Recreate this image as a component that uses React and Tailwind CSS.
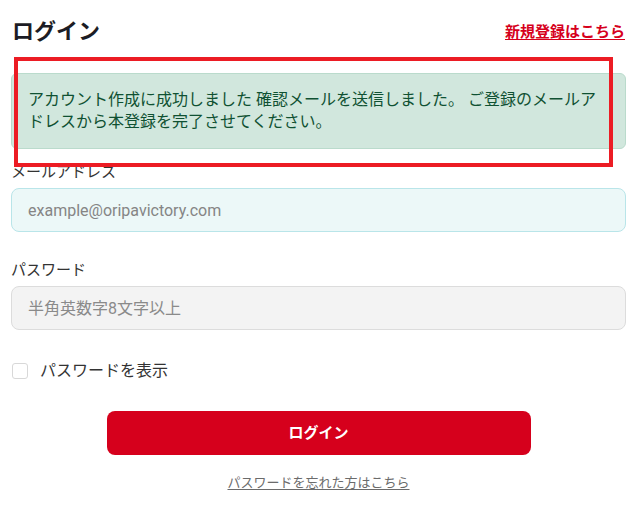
import React, { useState } from 'react'

const font = { fontFamily: 'Roboto, "Noto Sans CJK JP", sans-serif' }

export default function App() {
  const [show, setShow] = useState(false)

  return (
    <div className="relative min-h-[509px] bg-white pl-[11px] pr-[14px] pt-[18px] text-[#333]" style={font}>
      <div className="flex h-[28px] items-center justify-between">
        <h1 className="pl-px text-[22px] font-bold leading-[28px] text-[#1c1c24]">ログイン</h1>
        <a href="#" className="pr-px text-[15px] font-bold text-[#d6001c] underline underline-offset-2">
          新規登録はこちら
        </a>
      </div>

      <div className="mt-[27px] rounded-md border border-[#badbcc] bg-[#d1e7dd] px-4 py-[15px] text-[16px] leading-[22px] text-[#0f5132]">
        アカウント作成に成功しました 確認メールを送信しました。 ご登録のメールアドレスから本登録を完了させてください。
      </div>

      <label className="mt-[13px] block text-[15px] leading-5 text-[#333]">メールアドレス</label>
      <input
        type="email"
        placeholder="example@oripavictory.com"
        className="mt-[6px] block h-[44px] w-full rounded-lg border border-[#b9e5e9] bg-[#ecf8f8] px-4 text-[16px] text-[#333] outline-none placeholder:text-[#858585]"
      />

      <label className="mt-[28px] block text-[15px] leading-5 text-[#333]">パスワード</label>
      <input
        type={show ? 'text' : 'password'}
        placeholder="半角英数字8文字以上"
        className="mt-[6px] block h-[44px] w-full rounded-lg border border-[#dcdcdc] bg-[#f3f3f3] px-4 text-[16px] text-[#333] outline-none placeholder:text-[#8a8a8a]"
      />

      <label className="mt-[31px] flex h-5 items-center gap-[12px] pl-px">
        <input
          type="checkbox"
          checked={show}
          onChange={(e) => setShow(e.target.checked)}
          className="h-4 w-4 appearance-none rounded-[3px] border border-[#d8d8d8] bg-white"
        />
        <span className="text-[16px] leading-5 text-[#333]">パスワードを表示</span>
      </label>

      <div className="mt-[30px] flex justify-center">
        <button className="h-[44px] w-[424px] rounded-lg bg-[#d6001c] text-[15px] font-bold text-white">
          ログイン
        </button>
      </div>

      <div className="mt-[19px] flex justify-center">
        <a href="#" className="text-[13px] leading-[18px] text-[#6b6b6b] underline underline-offset-2">
          パスワードを忘れた方はこちら
        </a>
      </div>

      {/* annotation frame drawn over the alert */}
      <div className="pointer-events-none absolute left-[14px] top-[57px] h-[110px] w-[599px] border-4 border-[#ec1c24]" />
    </div>
  )
}
